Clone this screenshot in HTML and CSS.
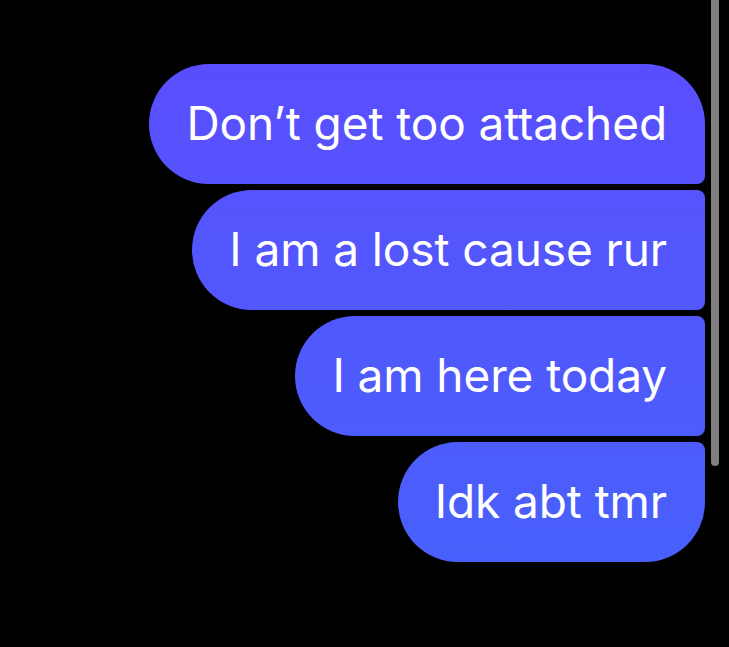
FILE: index.html
```html
<!DOCTYPE html>
<html>
<head>
<meta charset="utf-8">
<link rel="stylesheet" href="styles.css">
</head>
<body>
<div class="thread">
  <div class="bubble first">Don’t get too attached</div>
  <div class="bubble mid">I am a lost cause rur</div>
  <div class="bubble mid">I am here today</div>
  <div class="bubble last">Idk abt tmr</div>
</div>
<div class="scrollbar"></div>
</body>
</html>
```
FILE: styles.css
```css
html, body {
  margin: 0;
  padding: 0;
  background: #000;
}
body {
  width: 729px;
  height: 647px;
  overflow: hidden;
  position: relative;
  font-family: Inter, "Noto Sans", sans-serif;
}
.thread {
  display: flex;
  flex-direction: column;
  align-items: flex-end;
  gap: 6px;
  padding: 64px 24px 0 0;
}
.bubble {
  height: 120px;
  box-sizing: border-box;
  display: flex;
  align-items: center;
  padding: 0 38px 2px 37px;
  color: #fff;
  font-size: 46px;
  letter-spacing: -0.1px;
  background: linear-gradient(180deg, #5c4bff 0px, #5356fd 250px, #4563fb 647px);
  background-attachment: fixed;
  border-radius: 60px 8px 8px 60px;
}
.bubble.first {
  border-radius: 60px 60px 8px 60px;
}
.bubble.last {
  border-radius: 60px 8px 60px 60px;
}
.scrollbar {
  position: absolute;
  top: 0;
  right: 10px;
  width: 8px;
  height: 466px;
  background: #808080;
  border-radius: 0 0 4px 4px;
}
```
